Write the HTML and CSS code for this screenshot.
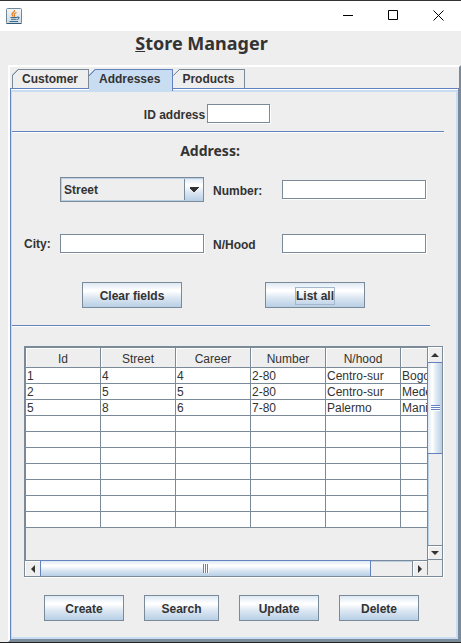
FILE: index.html
```html
<!DOCTYPE html>
<html lang="en">
<head>
<meta charset="utf-8">
<title>Store Manager</title>
<link rel="stylesheet" href="styles.css">
</head>
<body>
<header class="titlebar">
  <svg class="app-icon" width="16" height="16" viewBox="0 0 16 16" aria-hidden="true">
    <defs><linearGradient id="tile" x1="0" y1="0" x2="0" y2="1"><stop offset="0" stop-color="#f4f7f9"/><stop offset="1" stop-color="#ccd9e2"/></linearGradient></defs>
    <rect x=".5" y=".5" width="15" height="15" rx="1" fill="url(#tile)" stroke="#71879a"/>
    <path d="M.5 15.500h15" stroke="#345a78"/>
    <path d="M8.500 2c1 2-3 2.500-2.500 4.500.2 1 1 1.200 1 2M10.500 4.500c-2 .8-3 1.800-2 3 .4.600 0 1-.3 1.300" fill="none" stroke="#e8791e" stroke-width="1.200"/>
    <path d="M4.500 9.500h6.500M5 11.300h5M3.500 13.500h8.500M11 9.200c3-.6 2.500 2-.5 2.300" fill="none" stroke="#39698c" stroke-width="1.100"/>
  </svg>
  <div class="window-controls">
    <button type="button" aria-label="Minimize"><svg width="11" height="11" viewBox="0 0 11 11"><path d="M0 5.500h10" stroke="#000"/></svg></button>
    <button type="button" aria-label="Maximize"><svg width="11" height="11" viewBox="0 0 11 11"><path d="M.5.500h9v9h-9z" fill="none" stroke="#000"/></svg></button>
    <button type="button" aria-label="Close"><svg width="11" height="11" viewBox="0 0 11 11"><path d="M.5.500l10 10M10.500.500l-10 10" stroke="#000"/></svg></button>
  </div>
</header>
<h1 class="app-title"><u>S</u>tore Manager</h1>
<main class="frame">
  <div class="tabs" role="tablist">
    <button type="button" class="tab" role="tab" aria-selected="false">Customer</button>
    <button type="button" class="tab selected" role="tab" aria-selected="true">Addresses</button>
    <button type="button" class="tab" role="tab" aria-selected="false">Products</button>
  </div>
  <div class="panel" role="tabpanel">
    <div class="id-row">
      <label for="id-address">ID address</label>
      <input id="id-address" class="field" type="text">
    </div>
    <hr class="rule">
    <h2 class="section-title">Address:</h2>
    <form class="form">
      <select class="combo" id="street-type" aria-label="Street type"><option>Street</option></select>
      <label for="number">Number:</label>
      <input id="number" class="field" type="text">
      <label class="city-label" for="city">City:</label>
      <input id="city" class="field" type="text">
      <label for="nhood">N/Hood</label>
      <input id="nhood" class="field" type="text">
    </form>
    <div class="form-actions">
      <button type="button" class="button wide">Clear fields</button>
      <button type="button" class="button wide"><span class="focus">List all</span></button>
    </div>
    <hr class="rule short">
    <div class="scroll-pane">
      <div class="viewport">
        <table>
          <thead><tr><th>Id</th><th>Street</th><th>Career</th><th>Number</th><th>N/hood</th><th></th></tr></thead>
          <tbody>
            <tr><td>1</td><td>4</td><td>4</td><td>2-80</td><td>Centro-sur</td><td>Bogo</td></tr>
            <tr><td>2</td><td>5</td><td>5</td><td>2-80</td><td>Centro-sur</td><td>Mede</td></tr>
            <tr><td>5</td><td>8</td><td>6</td><td>7-80</td><td>Palermo</td><td>Mani</td></tr>
            <tr><td></td><td></td><td></td><td></td><td></td><td></td></tr>
            <tr><td></td><td></td><td></td><td></td><td></td><td></td></tr>
            <tr><td></td><td></td><td></td><td></td><td></td><td></td></tr>
            <tr><td></td><td></td><td></td><td></td><td></td><td></td></tr>
            <tr><td></td><td></td><td></td><td></td><td></td><td></td></tr>
            <tr><td></td><td></td><td></td><td></td><td></td><td></td></tr>
            <tr><td></td><td></td><td></td><td></td><td></td><td></td></tr>
          </tbody>
        </table>
      </div>
      <div class="bar vertical">
        <button type="button" class="arrow" aria-label="Scroll up"><svg width="8" height="4" viewBox="0 0 8 4"><path d="M4 0L8 4H0z"/></svg></button>
        <div class="track"><div class="thumb"><span class="grip"></span></div></div>
        <button type="button" class="arrow" aria-label="Scroll down"><svg width="8" height="4" viewBox="0 0 8 4"><path d="M0 0h8L4 4z"/></svg></button>
      </div>
      <div class="bar horizontal">
        <button type="button" class="arrow" aria-label="Scroll left"><svg width="4" height="8" viewBox="0 0 4 8"><path d="M4 0v8L0 4z"/></svg></button>
        <div class="track"><div class="thumb"><span class="grip"></span></div></div>
        <button type="button" class="arrow" aria-label="Scroll right"><svg width="4" height="8" viewBox="0 0 4 8"><path d="M0 0l4 4-4 4z"/></svg></button>
      </div>
      <div class="corner"></div>
    </div>
    <div class="actions">
      <button type="button" class="button">Create</button>
      <button type="button" class="button narrow">Search</button>
      <button type="button" class="button">Update</button>
      <button type="button" class="button">Delete</button>
    </div>
  </div>
</main>
</body>
</html>
```

FILE: styles.css
```css
:root {
  --line: #7a8a99;
  --blue: #6382bf;
  --pale: #c8ddf2;
  --face: #eeeeee;
  --ink: #333333;
  --shade: linear-gradient(#dde8f3 0%, #ffffff 30%, #ffffff 34%, #dde8f3 60%, #b8cfe5 100%);
}

* { box-sizing: border-box; }

body {
  margin: 0;
  min-height: 100vh;
  display: flex;
  flex-direction: column;
  background: var(--face);
  border-top: 1px solid #333333;
  border-bottom: 1px solid #222222;
  color: var(--ink);
  font: bold 12px/14px "Liberation Sans", Arial, sans-serif;
}

button, input, select {
  font: inherit;
  color: inherit;
  margin: 0;
  padding: 0;
  border-radius: 0;
}

svg { display: block; }

.titlebar {
  height: 30px;
  padding-left: 6px;
  display: flex;
  align-items: center;
  justify-content: space-between;
  background: #ffffff;
}

.window-controls { display: flex; }

.window-controls button {
  width: 45px;
  height: 30px;
  padding-bottom: 2px;
  display: grid;
  place-items: center;
  border: 0;
  background: none;
}

.app-title {
  margin: 0;
  height: 34px;
  padding-right: 58px;
  text-align: center;
  font: bold 18px/24px "Noto Sans", sans-serif;
}

.frame {
  flex: 1;
  display: flex;
  flex-direction: column;
  margin-left: 8px;
  border: 2px solid;
  border-color: #ffffff var(--line) var(--line) #ffffff;
}

.tabs {
  display: flex;
  padding: 2px 0 0 2px;
}

.tab {
  height: 19px;
  padding: 0 10px 0 9px;
  border: 1px solid var(--line);
  border-width: 1px 1px 0 1px;
  background: linear-gradient(135deg, var(--face) 4px, var(--line) 4px, var(--line) 5px, transparent 5px) border-box, var(--face);
  clip-path: polygon(6px 0, 100% 0, 100% 100%, 0 100%, 0 6px);
}

.tab + .tab { border-left: 0; }

.tab.selected {
  height: 22px;
  margin-bottom: -3px;
  padding: 0 12px 3px 10px;
  border-color: var(--blue);
  background: linear-gradient(135deg, var(--pale) 4px, var(--blue) 4px, var(--blue) 5px, transparent 5px) border-box, var(--pale);
  z-index: 1;
}

.panel {
  flex: 1;
  border: 1px solid var(--blue);
  border-right-color: var(--line);
  border-bottom-color: var(--line);
  box-shadow: inset 0 1px #ffffff, inset 1px 0 var(--pale), inset -2px -2px var(--pale), inset 0 3px var(--pale);
  padding: 3px 2px 16px 1px;
}

.id-row {
  display: flex;
  align-items: center;
  justify-content: center;
  gap: 2px;
  padding: 12px 54px 8px 0;
}

.id-row .field { width: 63px; }

.field {
  width: 100%;
  height: 19px;
  padding: 0 3px;
  border: 1px solid var(--line);
  background: #ffffff;
  box-shadow: 1px 1px #ffffff;
}

label { padding-top: 2px; }

.rule {
  height: 2px;
  margin: 0 12px 0 0;
  border: 0;
  border-top: 1px solid var(--blue);
  background: #ffffff;
}

.rule.short { margin-right: 26px; }

.section-title {
  margin: 8px 48px 0 0;
  text-align: center;
  font: bold 14px/20px "Noto Sans", sans-serif;
}

.form {
  display: grid;
  grid-template-columns: 36px 1fr 9px 69px 1fr;
  row-gap: 32px;
  align-items: center;
  padding: 16px 30px 0 12px;
}

.form > :nth-child(1), .form > :nth-child(5) { grid-column: 2; }
.form > :nth-child(2), .form > :nth-child(6) { grid-column: 4; }
.form > :nth-child(3), .form > :nth-child(7) { grid-column: 5; }
.form > .city-label { grid-column: 1; padding: 0; }

.combo {
  width: 100%;
  height: 25px;
  padding-left: 3px;
  appearance: none;
  border: 1px solid var(--line);
  background:
    linear-gradient(var(--line), var(--line)) right 18px top / 1px 100% no-repeat,
    conic-gradient(from -45deg at 50% 100%, var(--ink) 90deg, transparent 0) right 4px top 9px / 10px 5px no-repeat,
    var(--shade) right top / 18px 100% no-repeat,
    var(--face);
  box-shadow: inset 1px 1px #b8cfe5, inset 0 -1px #b8cfe5;
}

.form-actions {
  display: flex;
  gap: 83px;
  padding: 29px 0 17px 70px;
}

.button {
  width: 80px;
  height: 26px;
  padding-top: 2px;
  border: 1px solid var(--line);
  background: var(--shade);
}

.button.wide { width: 100px; }
.button.narrow { width: 75px; }

.focus {
  display: inline-block;
  padding: 1px 0;
  outline: 1px solid #a3b8cc;
}

.scroll-pane {
  display: grid;
  grid-template-columns: minmax(0, 1fr) 15px;
  margin: 19px 13px 0 12px;
  border: 1px solid var(--line);
  box-shadow: 1px 1px #ffffff;
}

.viewport {
  overflow: hidden;
  padding-bottom: 32px;
  border-top: 1px solid var(--line);
  border-left: 1px solid var(--line);
}

table {
  width: 450px;
  table-layout: fixed;
  border-collapse: separate;
  border-spacing: 0;
  font-weight: normal;
}

th, td {
  padding: 0 1px;
  border: 1px solid var(--line);
  border-width: 0 1px 1px 0;
}

th {
  height: 20px;
  padding-top: 3px;
  font-weight: normal;
  box-shadow: inset 1px 1px #ffffff;
}

td {
  height: 16px;
  padding-top: 1px;
  background: #ffffff;
}

.bar { display: flex; }

.bar.vertical {
  flex-direction: column;
  border-left: 1px solid var(--line);
}

.bar.horizontal { border-top: 1px solid var(--line); }

.arrow {
  flex: none;
  width: 15px;
  height: 15px;
  display: grid;
  place-items: center;
  border: 0;
  background: var(--face);
  box-shadow: inset 1px 1px #ffffff;
}

.vertical .arrow { width: 14px; }

.arrow svg { fill: var(--ink); }

.track {
  flex: 1;
  display: flex;
  box-shadow: inset 1px 1px #b8cfe5;
}

.vertical .track { flex-direction: column; }

.vertical .arrow + .track + .arrow {
  border-top: 1px solid var(--line);
  border-bottom: 1px solid var(--line);
}

.horizontal .arrow + .track + .arrow { border-left: 1px solid var(--line); }

.thumb {
  display: grid;
  place-items: center;
  border: 1px solid var(--blue);
}

.vertical .thumb {
  height: 50%;
  margin-left: -1px;
  border-right: 0;
  background: linear-gradient(90deg, #dde8f3, #ffffff 30%, #dde8f3 60%, #b8cfe5);
}

.horizontal .thumb {
  width: 89%;
  margin-top: -1px;
  border-bottom: 0;
  background: var(--shade);
}

.vertical .grip {
  width: 9px;
  height: 6px;
  background: repeating-linear-gradient(var(--blue) 0 1px, #ffffff 1px 2px);
}

.horizontal .grip {
  width: 6px;
  height: 9px;
  background: repeating-linear-gradient(90deg, var(--blue) 0 1px, #ffffff 1px 2px);
}

.corner {
  height: 15px;
  border-left: 1px solid var(--line);
}

.actions {
  display: flex;
  gap: 20px;
  padding: 18px 0 0 32px;
}
```
